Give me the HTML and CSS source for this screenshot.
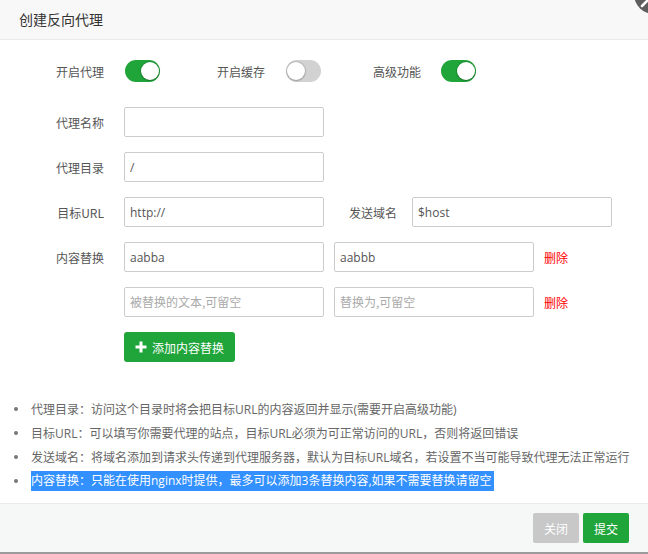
FILE: index.html
```html
<!DOCTYPE html>
<html lang="zh-CN">
<head>
<meta charset="utf-8">
<title>创建反向代理</title>
<link rel="stylesheet" href="styles.css">
</head>
<body>
<div class="dialog">
  <div class="header">创建反向代理</div>
  <span class="close-btn">
    <svg width="40" height="40" viewBox="0 0 40 40"><path d="M8 32 L32 8 M8 8 L32 32" stroke="#fff" stroke-width="2.5" stroke-linecap="round"/></svg>
  </span>
  <div class="content">
    <div class="switch-row">
      <div class="sw-group g1"><span class="sw-label">开启代理</span><span class="switch on"></span></div>
      <div class="sw-group g2"><span class="sw-label">开启缓存</span><span class="switch off"></span></div>
      <div class="sw-group g3"><span class="sw-label">高级功能</span><span class="switch on"></span></div>
    </div>
    <div class="form-row">
      <label class="f-label">代理名称</label>
      <input class="f-input" type="text" value="">
    </div>
    <div class="form-row">
      <label class="f-label">代理目录</label>
      <input class="f-input" type="text" value="/">
    </div>
    <div class="form-row">
      <label class="f-label">目标URL</label>
      <input class="f-input" type="text" value="http://">
      <label class="f-label2">发送域名</label>
      <input class="f-input" type="text" value="$host">
    </div>
    <div class="form-row">
      <label class="f-label">内容替换</label>
      <input class="f-input" type="text" value="aabba">
      <input class="f-input gap" type="text" value="aabbb">
      <a class="del">删除</a>
    </div>
    <div class="form-row">
      <label class="f-label"></label>
      <input class="f-input" type="text" placeholder="被替换的文本,可留空">
      <input class="f-input gap" type="text" placeholder="替换为,可留空">
      <a class="del">删除</a>
    </div>
    <div class="form-row">
      <label class="f-label"></label>
      <button class="add-btn"><svg class="plus" width="12" height="12" viewBox="0 0 12 12"><path d="M4.5 0.5h3v4h4v3h-4v4h-3v-4h-4v-3h4z" fill="#fff"/></svg><span>添加内容替换</span></button>
    </div>
  </div>
  <ul class="notes">
    <li>代理目录：访问这个目录时将会把目标URL的内容返回并显示(需要开启高级功能)</li>
    <li>目标URL：可以填写你需要代理的站点，目标URL必须为可正常访问的URL，否则将返回错误</li>
    <li>发送域名：将域名添加到请求头传递到代理服务器，默认为目标URL域名，若设置不当可能导致代理无法正常运行</li>
    <li><span class="hl">内容替换：只能在使用nginx时提供，最多可以添加3条替换内容,如果不需要替换请留空</span></li>
  </ul>
  <div class="footer">
    <button class="btn btn-close">关闭</button>
    <button class="btn btn-submit">提交</button>
  </div>
</div>
</body>
</html>
```

FILE: styles.css
```css
html, body {
  margin: 0;
  padding: 0;
  background: #fff;
}
body {
  font-family: "Open Sans", "Noto Sans CJK SC", sans-serif;
  font-size: 12px;
  color: #555;
}
.dialog {
  position: relative;
  height: 554px;
  box-sizing: border-box;
  display: flex;
  flex-direction: column;
  border-bottom: 2px solid #9c9c9c;
  overflow: hidden;
}
.header {
  height: 39px;
  line-height: 39px;
  padding-left: 19px;
  background: #f8f8f8;
  border-bottom: 1px solid #eaeaea;
  font-size: 14px;
  color: #333;
  font-family: "Noto Sans CJK SC", sans-serif;
}
.close-btn {
  position: absolute;
  left: 634px;
  top: -26px;
  width: 40px;
  height: 40px;
  border-radius: 50%;
  background: #5e5e5e;
}
.close-btn svg {
  display: block;
}
.content {
  display: flex;
  flex-direction: column;
}
.switch-row {
  display: flex;
  align-items: center;
  height: 22px;
  margin-top: 20px;
  padding-left: 56px;
}
.sw-group {
  display: flex;
  align-items: center;
}
.g2 { margin-left: 57px; }
.g3 { margin-left: 52px; }
.sw-label {
  width: 48px;
  margin-right: 21px;
  color: #555;
  font-family: "Noto Sans CJK SC", sans-serif;
  white-space: nowrap;
}
.g3 .sw-label { margin-right: 20px; }
.switch {
  position: relative;
  width: 35px;
  height: 22px;
  border-radius: 11px;
  background: #20a53a;
  box-sizing: border-box;
}
.switch::after {
  content: "";
  position: absolute;
  top: 2px;
  right: 1px;
  width: 18px;
  height: 18px;
  border-radius: 50%;
  background: #fff;
  box-shadow: 0 0 1px 1px rgba(0, 0, 0, 0.12), 0 1px 2px rgba(0, 0, 0, 0.2);
}
.switch.off {
  background: #d2d2d2;
}
.switch.off::after {
  right: auto;
  left: 1px;
}
.form-row {
  display: flex;
  align-items: center;
  height: 30px;
  margin-top: 15px;
}
.switch-row + .form-row {
  margin-top: 25px;
}
.f-label {
  width: 124px;
  padding-right: 20px;
  box-sizing: border-box;
  text-align: right;
  color: #555;
  font-family: "Noto Sans CJK SC", sans-serif;
  white-space: nowrap;
  flex-shrink: 0;
}
.f-label2 {
  width: 48px;
  margin-left: 25px;
  margin-right: 15px;
  color: #555;
  font-family: "Noto Sans CJK SC", sans-serif;
  white-space: nowrap;
}
.f-input {
  width: 200px;
  height: 30px;
  box-sizing: border-box;
  border: 1px solid #ccc;
  border-radius: 2px;
  padding: 0 5px;
  font-family: "Open Sans", "Noto Sans CJK SC", sans-serif;
  font-size: 12px;
  color: #555;
  background: #fff;
  outline: none;
  margin: 0;
}
.f-input::placeholder {
  color: #a9a9a9;
  font-family: "Noto Sans CJK SC", sans-serif;
}
.f-input.gap {
  margin-left: 10px;
}
.del {
  margin-left: 10px;
  color: #f00;
  font-family: "Noto Sans CJK SC", sans-serif;
  cursor: pointer;
}
.add-btn {
  display: flex;
  align-items: center;
  height: 30px;
  width: 111px;
  padding: 0 0 0 11px;
  box-sizing: border-box;
  border: none;
  border-radius: 3px;
  background: #20a53a;
  color: #fff;
  font-family: "Noto Sans CJK SC", sans-serif;
  font-size: 12px;
  margin: 0;
}
.add-btn .plus {
  margin-right: 5px;
  flex-shrink: 0;
}
.notes {
  list-style: none;
  margin: 35px 0 0 0;
  padding: 0;
}
.notes li {
  position: relative;
  display: flex;
  align-items: center;
  height: 24px;
  padding-left: 31px;
  color: #666;
  font-family: "Open Sans", "Noto Sans CJK SC", sans-serif;
  font-size: 12px;
  white-space: nowrap;
}
.notes li::before {
  content: "";
  position: absolute;
  left: 14px;
  top: 10px;
  width: 4px;
  height: 4px;
  border-radius: 50%;
  background: #777;
}
.hl {
  display: inline-block;
  line-height: 20px;
  background: #3390ff;
  color: #fff;
  padding-right: 2px;
}
.footer {
  margin-top: auto;
  height: 48px;
  border-top: 1px solid #ebebeb;
  background: #f6f7f7;
  display: flex;
  align-items: center;
  justify-content: flex-end;
  padding-right: 19px;
}
.btn {
  height: 30px;
  width: 46px;
  border: none;
  border-radius: 2px;
  color: #fff;
  font-family: "Noto Sans CJK SC", sans-serif;
  font-size: 12px;
  padding: 0;
  margin: 0 0 0 4px;
}
.btn-close {
  background: #c8c8c8;
}
.btn-submit {
  background: #20a53a;
}
```
